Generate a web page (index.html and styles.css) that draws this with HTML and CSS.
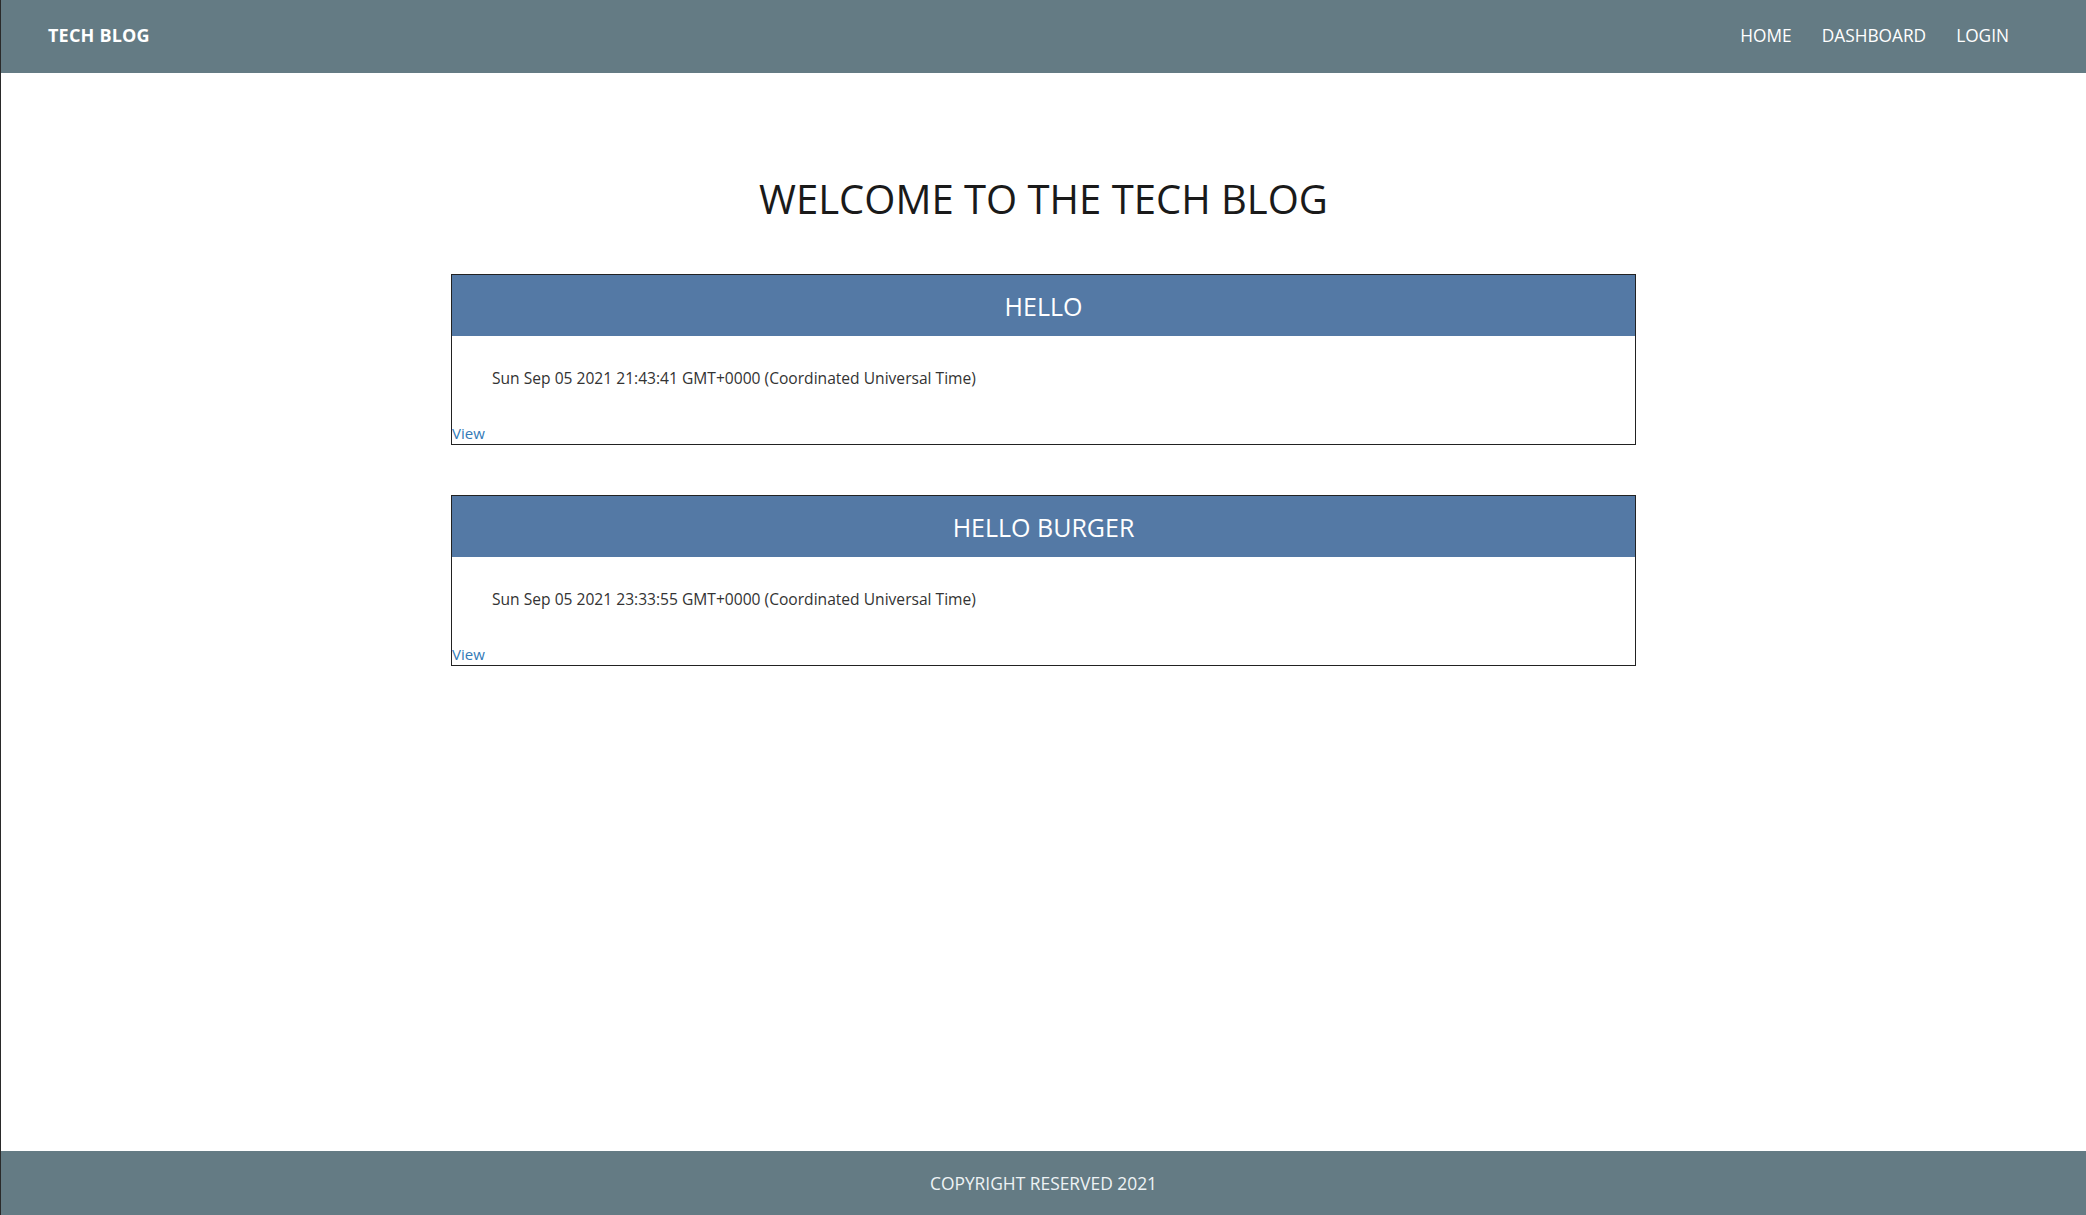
FILE: index.html
```html
<!DOCTYPE html>
<html lang="en">
<head>
<meta charset="utf-8">
<title>Tech Blog</title>
<link rel="stylesheet" href="styles.css">
</head>
<body>
<div class="page">
  <header class="topbar">
    <a class="brand" href="#">TECH BLOG</a>
    <nav class="nav">
      <a href="#">HOME</a>
      <a href="#">DASHBOARD</a>
      <a href="#">LOGIN</a>
    </nav>
  </header>
  <main class="main">
    <h1 class="title">WELCOME TO THE TECH BLOG</h1>
    <section class="posts">
      <article class="post">
        <h2 class="post-title">HELLO</h2>
        <p class="post-date">Sun Sep 05 2021 21:43:41 GMT+0000 (Coordinated Universal Time)</p>
        <a class="post-link" href="#">View</a>
      </article>
      <article class="post">
        <h2 class="post-title">HELLO BURGER</h2>
        <p class="post-date">Sun Sep 05 2021 23:33:55 GMT+0000 (Coordinated Universal Time)</p>
        <a class="post-link" href="#">View</a>
      </article>
    </section>
  </main>
  <footer class="footer">COPYRIGHT RESERVED 2021</footer>
</div>
</body>
</html>
```
FILE: styles.css
```css
* { box-sizing: border-box; }
html, body { margin: 0; padding: 0; }
body {
  font-family: "Open Sans", "Noto Sans", sans-serif;
  color: #1c1c1c;
  background: #ffffff;
}
.page {
  min-height: 100vh;
  display: flex;
  flex-direction: column;
  border-left: 1px solid #2a2a2a;
}
.topbar {
  height: 73px;
  background: #647b84;
  display: flex;
  align-items: center;
  justify-content: space-between;
  padding: 0 77px 3px 47px;
}
.brand {
  color: #ffffff;
  text-decoration: none;
  font-weight: 700;
  font-size: 18px;
  letter-spacing: 0.2px;
}
.nav {
  display: flex;
  gap: 30px;
}
.nav a {
  color: #ffffff;
  text-decoration: none;
  font-size: 17.3px;
}
.main {
  flex: 1;
  display: flex;
  flex-direction: column;
  align-items: center;
}
.title {
  margin: 98px 0 0;
  font-size: 40px;
  font-weight: 400;
  line-height: 56px;
  color: #1a1a1a;
}
.posts {
  width: 1185px;
  margin-top: 47px;
  display: flex;
  flex-direction: column;
  gap: 50px;
}
.post {
  border: 1px solid #222;
}
.post-title {
  margin: 0;
  height: 61px;
  background: #5479a5;
  color: #ffffff;
  font-size: 25px;
  font-weight: 400;
  display: flex;
  align-items: center;
  justify-content: center;
}
.post-date {
  margin: 30px 0 32px;
  padding-left: 40px;
  font-size: 15.6px;
  line-height: 24px;
  color: #333333;
}
.post-link {
  display: block;
  font-size: 15px;
  line-height: 22px;
  color: #337ab7;
  text-decoration: none;
}
.footer {
  height: 64px;
  background: #647b84;
  color: #eef3f5;
  font-size: 17.4px;
  display: flex;
  align-items: center;
  justify-content: center;
}
```
